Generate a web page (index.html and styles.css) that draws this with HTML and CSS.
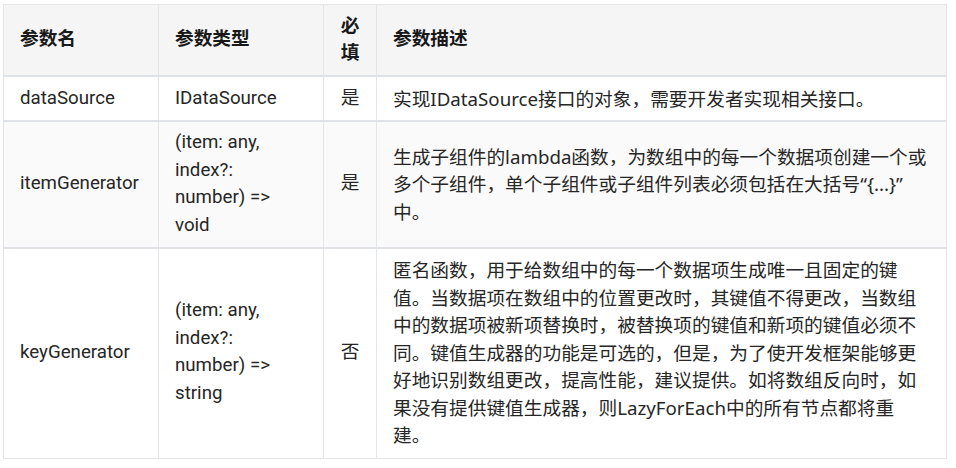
FILE: index.html
```html
<!DOCTYPE html>
<html lang="zh">
<head>
<meta charset="utf-8">
<link rel="stylesheet" href="styles.css">
</head>
<body>
<table class="params">
  <colgroup>
    <col class="c-name">
    <col class="c-type">
    <col class="c-req">
    <col class="c-desc">
  </colgroup>
  <thead>
    <tr>
      <th>参数名</th>
      <th>参数类型</th>
      <th class="center">必填</th>
      <th>参数描述</th>
    </tr>
  </thead>
  <tbody>
    <tr>
      <td>dataSource</td>
      <td>IDataSource</td>
      <td class="center">是</td>
      <td class="desc">实现IDataSource接口的对象，需要开发者实现相关接口。</td>
    </tr>
    <tr class="alt">
      <td>itemGenerator</td>
      <td>(item: any, index?: number) =&gt; void</td>
      <td class="center">是</td>
      <td class="desc">生成子组件的lambda函数，为数组中的每一个数据项创建一个或多个子组件，单个子组件或子组件列表必须包括在大括号“{...}”中。</td>
    </tr>
    <tr>
      <td>keyGenerator</td>
      <td>(item: any, index?: number) =&gt; string</td>
      <td class="center">否</td>
      <td class="desc">匿名函数，用于给数组中的每一个数据项生成唯一且固定的键值。当数据项在数组中的位置更改时，其键值不得更改，当数组中的数据项被新项替换时，被替换项的键值和新项的键值必须不同。键值生成器的功能是可选的，但是，为了使开发框架能够更好地识别数组更改，提高性能，建议提供。如将数组反向时，如果没有提供键值生成器，则LazyForEach中的所有节点都将重建。</td>
    </tr>
  </tbody>
</table>
</body>
</html>
```
FILE: styles.css
```css
html, body {
  margin: 0;
  padding: 0;
  background: #ffffff;
}
body {
  padding: 4px 0 0 3px;
  font-family: Roboto, "Noto Sans CJK SC", sans-serif;
  font-size: 18.7px;
  color: #262626;
}
.params {
  border-collapse: collapse;
  table-layout: fixed;
  width: 943px;
  border: 1px solid #e3e5e8;
}
.c-name { width: 155px; }
.c-type { width: 165px; }
.c-req { width: 53px; }
.c-desc { width: 570px; }
.params th,
.params td {
  text-align: left;
  vertical-align: middle;
  padding: 7.5px 16px;
  line-height: 27.5px;
  border-left: 1px solid #e3e5e8;
  border-right: 1px solid #e3e5e8;
  border-bottom: 2px solid #dfe3e8;
}
.params th {
  background: #f5f5f6;
  font-weight: 700;
  color: #191919;
}
.params .center {
  text-align: center;
  padding-left: 8px;
  padding-right: 8px;
}
.params .desc {
  font-family: "Noto Sans", "Noto Sans CJK SC", sans-serif;
}
.params tr.alt td {
  background: #fafafa;
}
.params tbody tr:last-child td {
  border-bottom: 1px solid #e3e5e8;
  padding-bottom: 9px;
}
```
